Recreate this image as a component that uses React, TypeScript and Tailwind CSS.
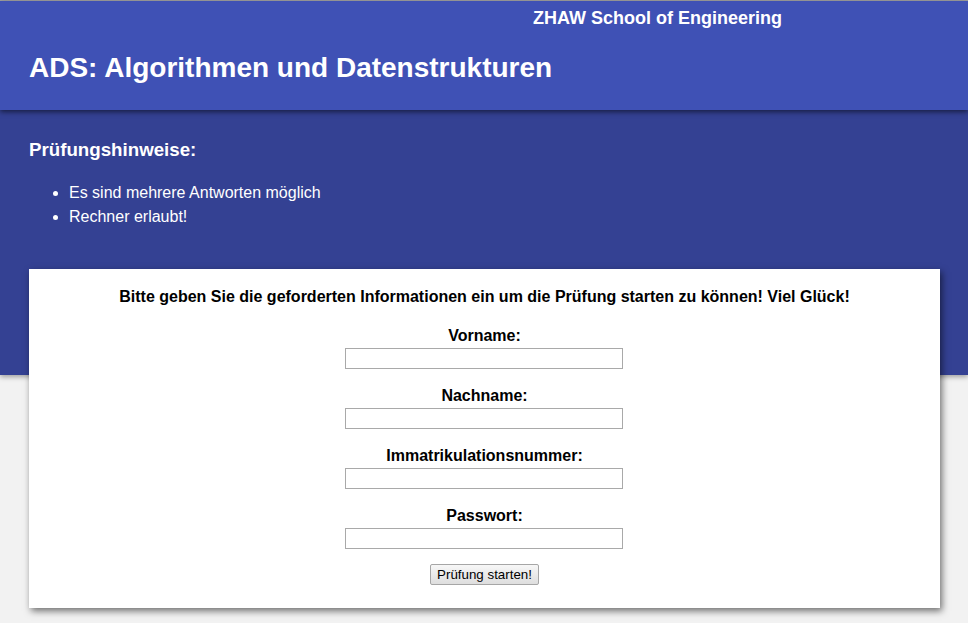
import React from 'react';

const fields = ['Vorname:', 'Nachname:', 'Immatrikulationsnummer:', 'Passwort:'];

const App = () => {
  return (
    <div className="min-h-[623px] bg-[#f2f2f2] font-['Liberation_Sans',Arial,sans-serif] border-t border-[#a3a3a3]">
      <header className="relative z-20 h-[109px] bg-[#3f51b5] pt-[7px] shadow-[0_2px_5px_rgba(0,0,0,0.55)] text-white">
        <div className="pl-[533px] text-[18px] leading-[20px] font-bold">ZHAW School of Engineering</div>
        <h1 className="mt-[24px] pl-[29px] text-[28px] leading-[32px] font-bold">
          ADS: Algorithmen und Datenstrukturen
        </h1>
      </header>

      <section className="relative z-10 h-[265px] bg-[#344193] pt-[29px] pl-[29px] text-white shadow-[0_2px_5px_rgba(0,0,0,0.35)]">
        <h3 className="text-[18.72px] leading-[22px] font-bold">Prüfungshinweise:</h3>
        <ul className="mt-[20px] pl-[40px] list-disc text-[16px] leading-[24px]">
          <li>Es sind mehrere Antworten möglich</li>
          <li>Rechner erlaubt!</li>
        </ul>
      </section>

      <div className="relative z-30 ml-[29px] mr-[28px] -mt-[106px] bg-white pt-[18px] pb-[23px] shadow-[2px_3px_7px_rgba(0,0,0,0.55)] text-black">
        <p className="text-center text-[16px] leading-[20px] font-bold">
          Bitte geben Sie die geforderten Informationen ein um die Prüfung starten zu können! Viel Glück!
        </p>
        <form className="mt-[2px] flex flex-col items-center" onSubmit={(e) => e.preventDefault()}>
          {fields.map((label) => (
            <div key={label} className="mt-[17px] flex flex-col items-center">
              <label className="text-[16px] leading-[20px] font-bold">{label}</label>
              <input
                type={label === 'Passwort:' ? 'password' : 'text'}
                className="mt-[2px] mr-[2px] h-[21px] w-[278px] border border-[#a9a9a9] bg-white outline-none"
              />
            </div>
          ))}
          <button
            type="submit"
            className="mt-[15px] h-[21px] w-[109px] rounded-[2px] border border-[#a6a6a6] bg-gradient-to-b from-[#f7f7f7] to-[#dedede] text-[13.33px] leading-[19px] text-black"
          >
            Prüfung starten!
          </button>
        </form>
      </div>
    </div>
  );
};

export default App;
